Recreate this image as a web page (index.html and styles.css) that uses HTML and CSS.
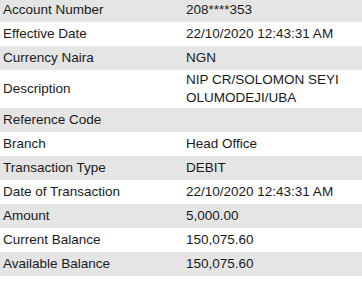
FILE: index.html
```html
<!DOCTYPE html>
<html>
<head>
<meta charset="utf-8">
<link rel="stylesheet" href="styles.css">
</head>
<body>
<table class="details">
  <colgroup><col class="col-label"><col class="col-value"></colgroup>
  <tr class="shade first"><td class="label">Account Number</td><td class="value">208****353</td></tr>
  <tr><td class="label">Effective Date</td><td class="value">22/10/2020 12:43:31 AM</td></tr>
  <tr class="shade"><td class="label">Currency Naira</td><td class="value">NGN</td></tr>
  <tr class="multi"><td class="label">Description</td><td class="value">NIP CR/SOLOMON SEYI<br>OLUMODEJI/UBA</td></tr>
  <tr class="shade"><td class="label">Reference Code</td><td class="value"></td></tr>
  <tr><td class="label">Branch</td><td class="value">Head Office</td></tr>
  <tr class="shade"><td class="label">Transaction Type</td><td class="value">DEBIT</td></tr>
  <tr><td class="label">Date of Transaction</td><td class="value">22/10/2020 12:43:31 AM</td></tr>
  <tr class="shade"><td class="label">Amount</td><td class="value">5,000.00</td></tr>
  <tr><td class="label">Current Balance</td><td class="value">150,075.60</td></tr>
  <tr class="shade"><td class="label">Available Balance</td><td class="value">150,075.60</td></tr>
</table>
</body>
</html>
```

FILE: styles.css
```css
html, body {
  margin: 0;
  padding: 0;
  background: #ffffff;
}
body {
  font-family: "Liberation Sans", Arial, sans-serif;
  font-size: 13.5px;
  color: #1a1a1a;
}
.details {
  width: 362px;
  border-collapse: collapse;
  table-layout: fixed;
}
.col-label { width: 181px; }
.details td {
  height: 18px;
  line-height: 18px;
  padding: 3px 0;
  vertical-align: middle;
  white-space: nowrap;
}
.details .label { padding-left: 3px; }
.details .value { padding-left: 5px; }
.shade td { background: #e5e5e5; }
.first td { padding-top: 1px; }
.multi td { padding: 1px 0; }
.multi .label { padding-left: 3px; }
.multi .value { padding-left: 5px; }
```
